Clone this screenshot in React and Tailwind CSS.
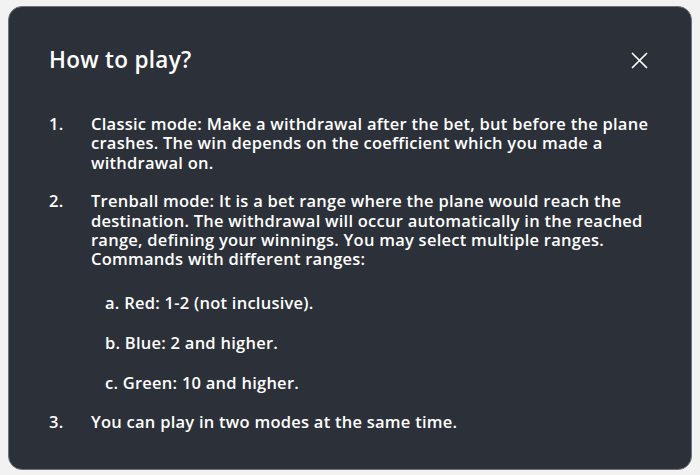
import React from "react";

const font = { fontFamily: '"Open Sans", "Noto Sans", sans-serif' };

function Item({ n, children }) {
  return (
    <li className="flex">
      <span className="w-[42px] shrink-0">{n}</span>
      <div className="flex-1">{children}</div>
    </li>
  );
}

export default function App() {
  return (
    <div className="w-[700px] h-[475px] bg-[#f2f2f2] p-[6px_8px_5px_8px]" style={font}>
      <div className="h-full rounded-[14px] bg-[#2c3038] border border-[#70747a] text-white px-[40px] pt-[38px]">
        <div className="flex items-center justify-between">
          <h2 className="text-[22.5px] font-semibold leading-[30px] tracking-[0.3px]">How to play?</h2>
          <svg width="17" height="17" viewBox="0 0 17 17" className="mr-[3px]">
            <path d="M1.5 1.5 L15.5 15.5 M15.5 1.5 L1.5 15.5" stroke="white" strokeWidth="1.7" strokeLinecap="round" />
          </svg>
        </div>
        <ol className="mt-[39px] text-[16.5px] font-semibold leading-[19.4px] tracking-[0.25px]">
          <Item n="1.">
            Classic mode: Make a withdrawal after the bet, but before the plane<br />
            crashes. The win depends on the coefficient which you made a<br />
            withdrawal on.
          </Item>
          <li className="h-[19px]" />
          <Item n="2.">
            Trenball mode: It is a bet range where the plane would reach the<br />
            destination. The withdrawal will occur automatically in the reached<br />
            range, defining your winnings. You may select multiple ranges.<br />
            Commands with different ranges:
            <div className="pl-[14px] mt-[24px] flex flex-col gap-[20.6px]">
              <div>a. Red: 1-2 (not inclusive).</div>
              <div>b. Blue: 2 and higher.</div>
              <div>c. Green: 10 and higher.</div>
            </div>
          </Item>
          <li className="h-[19.6px]" />
          <Item n="3.">You can play in two modes at the same time.</Item>
        </ol>
      </div>
    </div>
  );
}
